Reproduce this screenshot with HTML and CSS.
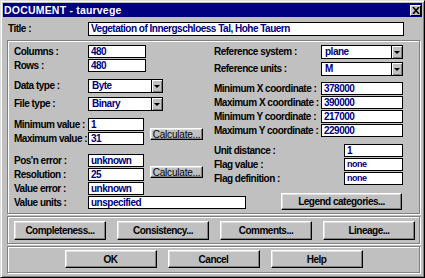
FILE: index.html
```html
<!DOCTYPE html>
<html lang="en">
<head>
	<meta charset="UTF-8">
	<title>DOCUMENT - taurvege</title>
	<link rel="stylesheet" href="styles.css">
</head>
<body>
	<div class="window">
		<div class="titlebar">
			<span class="caption">DOCUMENT - taurvege</span>
			<span class="close">
				<svg width="8" height="7" viewBox="0 0 8 7"><path d="M1 0L7 7M7 0L1 7" stroke="#000" stroke-width="1.6"/></svg>
			</span>
		</div>
		<div class="body">
			<div class="row title-row">
				<span class="lbl">Title :</span>
				<div class="edit title-edit">Vegetation of Innergschloess Tal, Hohe Tauern</div>
			</div>

			<div class="group main">
				<!-- left half of the form -->
				<div class="col left">
					<div class="row"><span class="lbl">Columns :</span><div class="edit w58">480</div></div>
					<div class="row mt1"><span class="lbl">Rows :</span><div class="edit w58">480</div></div>

					<div class="row mt7"><span class="lbl">Data type :</span><div class="combo w75"><span class="val">Byte</span><span class="arrow"></span></div></div>
					<div class="row mt4"><span class="lbl">File type :</span><div class="combo w75"><span class="val">Binary</span><span class="arrow"></span></div></div>

					<div class="row mt7"><span class="lbl">Minimum value :</span><div class="edit w56">1</div></div>
					<div class="row mt1"><span class="lbl">Maximum value :</span><div class="edit w56">31</div><button class="btn calc calc1">Calculate...</button></div>

					<div class="row mt9"><span class="lbl">Pos'n error :</span><div class="edit w56">unknown</div></div>
					<div class="row mt1"><span class="lbl">Resolution :</span><div class="edit w56">25</div><button class="btn calc calc2">Calculate...</button></div>
					<div class="row mt1"><span class="lbl">Value error :</span><div class="edit w56">unknown</div></div>
					<div class="row mt1"><span class="lbl">Value units :</span><div class="edit w158">unspecified</div></div>
				</div>

				<!-- right half -->
				<div class="col right">
					<div class="row"><span class="lbl">Reference system :</span><div class="combo w82"><span class="val">plane</span><span class="arrow"></span></div></div>
					<div class="row mt3"><span class="lbl">Reference units :</span><div class="combo w82"><span class="val">M</span><span class="arrow"></span></div></div>

					<div class="row mt6"><span class="lbl">Minimum X coordinate :</span><div class="edit w82">378000</div></div>
					<div class="row mt1"><span class="lbl">Maximum X coordinate :</span><div class="edit w82">390000</div></div>
					<div class="row mt1"><span class="lbl">Minimum Y coordinate :</span><div class="edit w82">217000</div></div>
					<div class="row mt1"><span class="lbl">Maximum Y coordinate :</span><div class="edit w82">229000</div></div>

					<div class="row mt7"><span class="lbl wide">Unit distance :</span><div class="edit w59">1</div></div>
					<div class="row mt1"><span class="lbl wide">Flag value :</span><div class="edit w59 small">none</div></div>
					<div class="row mt1"><span class="lbl wide">Flag definition :</span><div class="edit w59 small">none</div></div>

					<div class="row mt8 legend-row"><button class="btn legend">Legend categories...</button></div>
				</div>
			</div>

			<div class="group btnbar four">
				<button class="btn">Completeness...</button>
				<button class="btn">Consistency...</button>
				<button class="btn">Comments...</button>
				<button class="btn">Lineage...</button>
			</div>

			<div class="group btnbar three">
				<button class="btn">OK</button>
				<button class="btn">Cancel</button>
				<button class="btn">Help</button>
			</div>
		</div>
	</div>
</body>
</html>
```

FILE: styles.css
```css
*{
	margin: 0;
	padding: 0;
	box-sizing: border-box;
}
body{
	background: #c0c0c0;
	font-family: "Liberation Sans", Arial, sans-serif;
	font-size: 10px;
	font-weight: bold;
	letter-spacing: -0.5px;
	color: #000;
}
.window{
	width: 425px;
	height: 278px;
	background: #c0c0c0;
	border: 1px solid;
	border-color: #dfdfdf #000 #000 #dfdfdf;
	box-shadow: inset 1px 1px 0 #fff, inset -1px -1px 0 #808080;
	padding: 2px;
}
.titlebar{
	height: 14px;
	background: #000080;
	display: flex;
	align-items: center;
	justify-content: space-between;
	padding-left: 1px;
}
.caption{
	color: #fff;
	font-size: 10.5px;
	letter-spacing: 0.2px;
	line-height: 14px;
}
.close{
	width: 11px;
	height: 11px;
	margin-right: 1px;
	background: #c0c0c0;
	border: 1px solid;
	border-color: #fff #000 #000 #fff;
	display: flex;
	align-items: center;
	justify-content: center;
}
.close svg{
	display: block;
}
.body{
	padding: 5px 0 0 4px;
}
.row{
	display: flex;
	align-items: flex-start;
}
.lbl{
	display: block;
	flex-shrink: 0;
	width: 74px;
	line-height: 13px;
	white-space: nowrap;
}
.title-row .lbl{
	width: 80px;
	margin-left: 1px;
	line-height: 14px;
}
.right .lbl{
	width: 107px;
}
.right .lbl.wide{
	width: 130px;
}
.edit{
	flex-shrink: 0;
	height: 13px;
	background: #fff;
	color: #000080;
	border: 1px solid #000;
	padding-left: 2px;
	line-height: 11px;
	white-space: nowrap;
	overflow: hidden;
}
.edit.small{
	font-size: 9px;
}
.title-edit{
	width: 316px;
	height: 14px;
	line-height: 12px;
}
.w56{ width: 56px; }
.w58{ width: 58px; }
.w59{ width: 59px; }
.w75{ width: 75px; }
.w82{ width: 82px; }
.w158{ width: 158px; }

.mt1{ margin-top: 1px; }
.mt3{ margin-top: 3px; }
.mt4{ margin-top: 4px; }
.mt6{ margin-top: 6px; }
.mt7{ margin-top: 7px; }
.mt8{ margin-top: 8px; }
.mt9{ margin-top: 9px; }

/* drop-down list */
.combo{
	flex-shrink: 0;
	height: 14px;
	display: flex;
	background: #fff;
	border: 1px solid #000;
}
.combo .val{
	flex: 1;
	color: #000080;
	padding-left: 3px;
	line-height: 12px;
}
.combo .arrow{
	width: 11px;
	background: #c0c0c0;
	border-left: 1px solid #000;
	box-shadow: inset 1px 1px 0 #fff, inset -1px -1px 0 #808080;
	display: flex;
	align-items: center;
	justify-content: center;
}
.combo .arrow::after{
	content: "";
	border-left: 3px solid transparent;
	border-right: 3px solid transparent;
	border-top: 3px solid #000;
}

/* push buttons */
.btn{
	font: inherit;
	letter-spacing: inherit;
	color: #000;
	background: #c0c0c0;
	border: 1px solid;
	border-color: #fff #000 #000 #fff;
	box-shadow: inset -1px -1px 0 #808080, inset 1px 1px 0 #dfdfdf;
	text-align: center;
	white-space: nowrap;
}
.calc{
	flex-shrink: 0;
	width: 53px;
	height: 12px;
	line-height: 9px;
	margin-left: 6px;
	font-weight: normal;
	letter-spacing: -0.2px;
}
.calc1{ margin-top: -4px; }
.calc2{ margin-top: -2px; }
.legend-row{
	justify-content: flex-end;
	padding-right: 1px;
}
.legend{
	width: 121px;
	height: 17px;
}

/* etched frames */
.group{
	width: 413px;
	border: 1px solid #808080;
	box-shadow: 1px 1px 0 #fff, inset 1px 1px 0 #fff;
}
.main{
	margin-top: 4px;
	height: 174px;
	display: flex;
	padding: 4px 0 0 6px;
}
.col.left{
	width: 200px;
}
.col.right{
	width: 189px;
}
.btnbar{
	margin-top: 2px;
	display: flex;
}
.btnbar .btn{
	width: 92px;
}
.four{
	height: 28px;
	padding: 4px 0 0 6px;
	gap: 11px;
}
.four .btn{
	height: 19px;
}
.three{
	height: 27px;
	padding-top: 3px;
	justify-content: center;
	gap: 11px;
}
.three .btn{
	height: 18px;
}
```
